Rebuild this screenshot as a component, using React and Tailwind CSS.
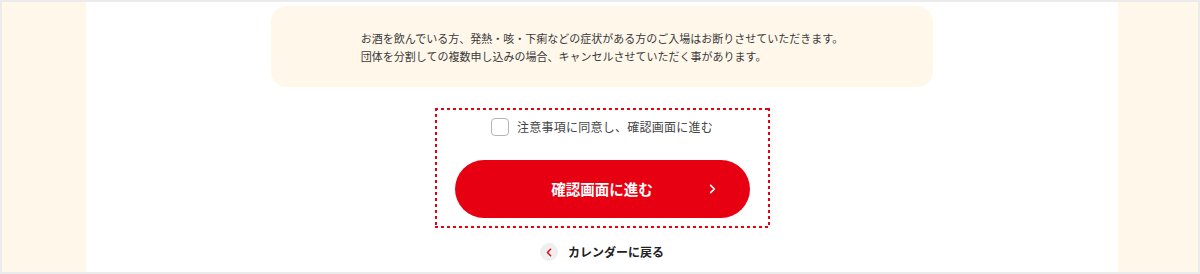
import React, { useState } from 'react';

const jp = { fontFamily: '"Noto Sans CJK JP", "Noto Sans", sans-serif' };

function Chevron({ dir = 'right', className = '' }) {
  const d = dir === 'right' ? 'M2 1.5 L6.5 6 L2 10.5' : 'M6.5 1.5 L2 6 L6.5 10.5';
  return (
    <svg viewBox="0 0 8.5 12" className={className} fill="none">
      <path d={d} stroke="currentColor" strokeWidth="2" strokeLinecap="round" strokeLinejoin="round" />
    </svg>
  );
}

export default function App() {
  const [agreed, setAgreed] = useState(false);

  return (
    <div className="w-[1200px] h-[274px] border-2 border-[#ebebeb] flex bg-white" style={jp}>
      <div className="w-[84px] bg-[#fff7ea]" />

      <main className="flex-1 flex flex-col items-center pt-[4px]">
        <div className="w-[662px] h-[81px] rounded-[16px] bg-[#fff7ea] pt-[23px]">
          <p className="mx-auto w-fit text-[11px] leading-[18px] text-[#3a3a3a]">
            お酒を飲んでいる方、発熱・咳・下痢などの症状がある方のご入場はお断りさせていただきます。
            <br />
            団体を分割しての複数申し込みの場合、キャンセルさせていただく事があります。
          </p>
        </div>

        {/* dotted frame: 3px dashes, 3px gaps */}
        <div className="mt-[21px] p-[2px] flex bg-no-repeat bg-[repeating-linear-gradient(90deg,#e60012_0_3px,transparent_3px_6px),repeating-linear-gradient(90deg,#e60012_0_3px,transparent_3px_6px),repeating-linear-gradient(180deg,#e60012_0_3px,transparent_3px_6px),repeating-linear-gradient(180deg,#e60012_0_3px,transparent_3px_6px)] bg-size-[100%_2px,100%_2px,2px_100%,2px_100%] bg-position-[0_0,0_100%,0_0,100%_0]">
          <div className="px-[18px] py-[8px] flex flex-col items-center">
            <label className="h-[18px] flex items-center gap-[8px] cursor-pointer">
              <input
                type="checkbox"
                checked={agreed}
                onChange={(e) => setAgreed(e.target.checked)}
                className="appearance-none w-[18px] h-[18px] rounded-[4px] border border-[#b5b5b5] bg-white checked:bg-[#e60012] checked:border-[#e60012]"
              />
              <span className="text-[12px] tracking-[0.02em] text-[#444]">注意事項に同意し、確認画面に進む</span>
            </label>

            <button className="relative mt-[24px] w-[295px] h-[58px] rounded-full bg-[#e60012] text-white text-[14.5px] font-bold flex items-center justify-center">
              確認画面に進む
              <Chevron className="absolute right-[34px] top-1/2 -translate-y-1/2 w-[7px] h-[11px]" />
            </button>
          </div>
        </div>

        <a href="#" className="mt-[15px] flex items-center gap-[10px] text-[12px] font-bold text-[#222]">
          <span className="w-[18px] h-[18px] rounded-full bg-[#efefef] flex items-center justify-center text-[#e60012]">
            <Chevron dir="left" className="w-[6px] h-[9px]" />
          </span>
          カレンダーに戻る
        </a>
      </main>

      <div className="w-[80px] bg-[#fff7ea]" />
    </div>
  );
}
